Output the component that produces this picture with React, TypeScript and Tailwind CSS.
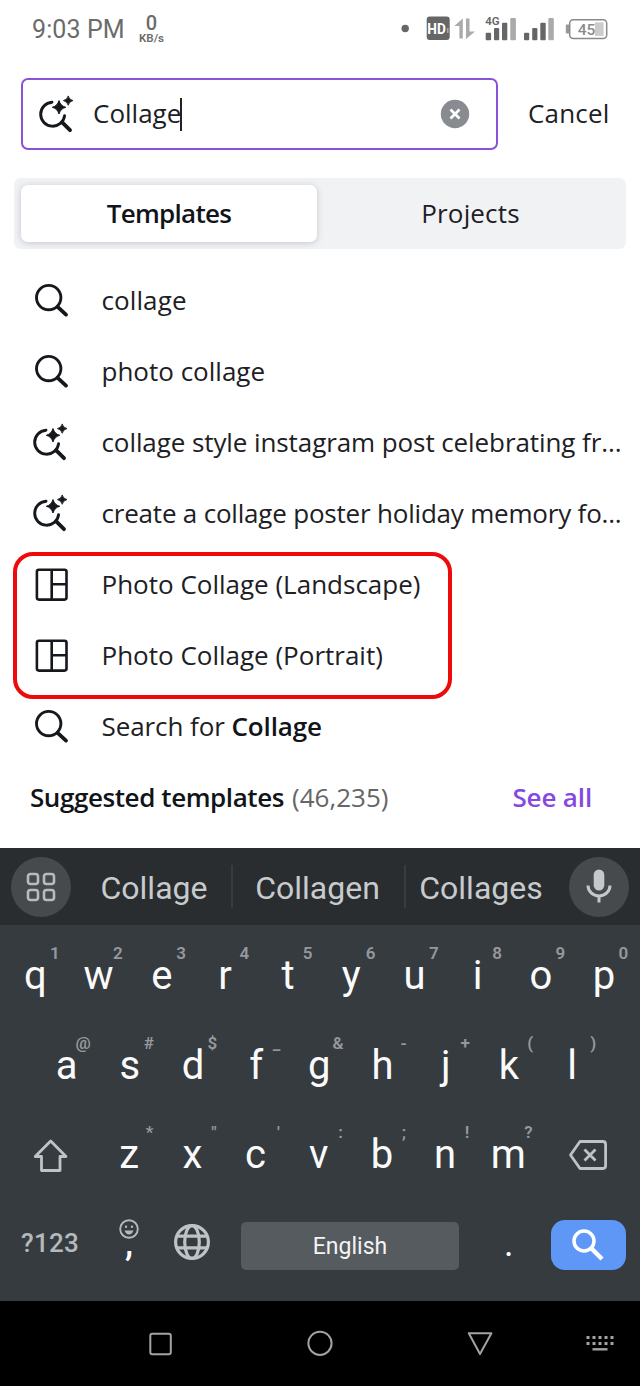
import React from 'react';

const ROBOTO = 'font-[Roboto,sans-serif]';

function SearchIcon() {
  return (
    <svg width="40" height="40" viewBox="0 0 40 40" fill="none" stroke="#15181c" className="shrink-0">
      <circle cx="18.7" cy="17.6" r="12.2" strokeWidth="2.9" />
      <path d="M27.6 26.8L36 34.6" strokeWidth="3.8" strokeLinecap="round" />
    </svg>
  );
}

function MagicSearchIcon() {
  return (
    <svg width="40" height="40" viewBox="0 0 40 40" fill="none" stroke="#15181c" className="shrink-0">
      <path d="M16 8.2A12 12 0 1 0 28.6 21.6" strokeWidth="2.9" strokeLinecap="round" />
      <path d="M26.2 28.4L34 36.2" strokeWidth="3.8" strokeLinecap="round" />
      <path
        d="M23 6.6Q24.6 12 29.7 13.3Q24.6 14.6 23 20Q21.4 14.6 16.3 13.3Q21.4 12 23 6.6Z"
        fill="#15181c"
        strokeWidth="1"
        strokeLinejoin="round"
      />
      <path
        d="M32.2 1.9Q33.1 5.7 37 6.6Q33.1 7.5 32.2 11.3Q31.3 7.5 27.4 6.6Q31.3 5.7 32.2 1.9Z"
        fill="#15181c"
        strokeWidth="0.8"
        strokeLinejoin="round"
      />
    </svg>
  );
}

function LayoutIcon() {
  return (
    <svg width="40" height="40" viewBox="0 0 40 40" fill="none" stroke="#15181c" strokeWidth="2.6" className="shrink-0">
      <rect x="6.9" y="5.8" width="29.6" height="29.8" rx="2" />
      <path d="M21.7 5.8V35.6M21.7 20.3H36.5" />
    </svg>
  );
}

function StatusBar() {
  return (
    <div className={`flex h-[58px] shrink-0 items-center text-[#6b6b6b] ${ROBOTO}`}>
      <div className="ml-[32px] w-[106px] pt-[2px] text-[25px] leading-[58px] tracking-[0.1px]">9:03 PM</div>
      <div className="flex w-[27px] flex-col items-center pt-px font-medium">
        <span className="text-[20px] leading-[17px]">0</span>
        <span className="text-[11.5px] font-semibold leading-[13px]">KB/s</span>
      </div>
      <svg width="220" height="58" viewBox="395 0 220 58" className="ml-auto mr-[25px]" fill="#666">
        <circle cx="405.2" cy="28.5" r="3.7" />
        <rect x="426.7" y="16.5" width="23" height="23.5" rx="3" />
        <text x="427.3" y="33.8" fontSize="15" fontWeight="700" fill="#fff" textLength="18.5" lengthAdjust="spacingAndGlyphs">HD</text>
        <rect x="447.2" y="28" width="1.2" height="5" fill="#bbb" />
        <path d="M462.8 18.5V38.5H459.4V26H454.3Z" fill="#aaa" />
        <path d="M466 18.5V39L475 31.5H469.5V18.5Z" fill="#aaa" />
        <text x="485.2" y="24.6" fontSize="11.5" fontWeight="600">4G</text>
        <rect x="485.7" y="32.7" width="5.4" height="7.6" rx="1" />
        <rect x="494" y="28" width="5.2" height="12.3" rx="1" />
        <rect x="502" y="22.7" width="5.3" height="17.6" rx="1" />
        <rect x="510.3" y="18" width="5.6" height="22.3" rx="1" fill="#aaa" />
        <rect x="524" y="32.7" width="5.2" height="7.6" rx="1" />
        <rect x="532.2" y="28" width="5.2" height="12.3" rx="1" />
        <rect x="540.3" y="22.7" width="5.4" height="17.6" rx="1" />
        <rect x="548.3" y="18" width="5.5" height="22.3" rx="1" fill="#aaa" />
        <rect x="565.8" y="24.5" width="3.5" height="9" rx="1" fill="#999" />
        <rect x="569.7" y="19.7" width="37" height="18.8" rx="3.5" fill="#fff" stroke="#8a8a8a" strokeWidth="1.5" />
        <rect x="595" y="22.3" width="8.6" height="13.6" fill="#ccc" />
        <text x="577.8" y="34.6" fontSize="15.5" fontWeight="500" fill="#8c8c8c">45</text>
      </svg>
    </div>
  );
}

function SearchBar() {
  return (
    <div className="mt-[20px] flex h-[72px] shrink-0 items-center">
      <div className="ml-[21px] flex h-[72px] w-[477px] items-center rounded-[7px] border-2 border-[#8c52d6]">
        <div className="ml-[12.5px] pb-[1px]"><MagicSearchIcon /></div>
        <span className="ml-[17.5px] pb-[3px] text-[26px] leading-[34px]">Collage</span>
        <span className="-ml-px h-[33px] w-[2px] bg-[#222]" />
        <svg width="30" height="30" viewBox="0 0 30 30" className="ml-auto mr-[26px]">
          <circle cx="15" cy="15" r="14.2" fill="#888c91" />
          <path d="M10.5 10.5L19.5 19.5M19.5 10.5L10.5 19.5" stroke="#fff" strokeWidth="2.6" />
        </svg>
      </div>
      <span className="ml-[30px] pb-[3px] text-[26px] leading-[34px] tracking-[0.2px]">Cancel</span>
    </div>
  );
}

function Tabs() {
  return (
    <div className="mx-[14px] mt-[28px] flex h-[71px] shrink-0 items-center rounded-[7px] bg-[#f1f2f4] px-[7px] text-[26px]">
      <div className="flex h-[57px] w-[296px] items-center justify-center rounded-[7px] bg-white pb-px font-semibold tracking-[-0.7px] text-[#111418] shadow-[0_1px_6px_rgba(64,72,90,0.25)]">
        Templates
      </div>
      <div className="flex flex-1 items-center justify-center pb-px pl-[5px] tracking-[0.15px]">Projects</div>
    </div>
  );
}

const ICONS = { search: SearchIcon, magic: MagicSearchIcon, layout: LayoutIcon };

function Row({ icon, tracking = '', children }: { icon: keyof typeof ICONS; tracking?: string; children: React.ReactNode }) {
  const Icon = ICONS[icon];
  return (
    <div className="flex h-[71px] items-center pl-[30px]">
      <Icon />
      <span className={`ml-[31.5px] whitespace-nowrap pt-[2px] text-[26px] leading-[35px] ${tracking}`}>{children}</span>
    </div>
  );
}

function Suggestions() {
  return (
    <div className="relative mt-[15px] h-[584px] shrink-0">
      <Row icon="search" tracking="tracking-[0.1px]">collage</Row>
      <Row icon="search">photo collage</Row>
      <Row icon="magic" tracking="tracking-[-0.09px]">collage style instagram post celebrating fr...</Row>
      <Row icon="magic" tracking="tracking-[-0.2px]">create a collage poster holiday memory fo...</Row>
      <Row icon="layout">Photo Collage (Landscape)</Row>
      <Row icon="layout">Photo Collage (Portrait)</Row>
      <Row icon="search" tracking="tracking-[-0.08px]">Search for <b className="font-semibold tracking-[-0.15px] text-[#111418]">Collage</b></Row>
      <div className="flex h-[71px] items-center pl-[30px] pr-[48px] pt-[2px] text-[26px] font-semibold leading-[35px]">
        <span className="tracking-[-0.42px] text-[#111418]">Suggested templates</span>
        <span className="ml-[8px] font-medium text-[#666]">(46,235)</span>
        <span className="ml-auto tracking-[-0.15px] text-[#8548e0]">See all</span>
      </div>
      <div className="absolute left-[13px] top-[288px] h-[147px] w-[439px] rounded-[20px] border-4 border-[#ee0a0a]" />
    </div>
  );
}

function SuggestionStrip() {
  return (
    <div className="flex h-[77px] shrink-0 items-center bg-[#292d30] text-[32px] text-[#c8cbcd]">
      <div className="ml-[11px] flex size-[60px] items-center justify-center rounded-full bg-[#464a4d]">
        <svg width="30" height="30" viewBox="0 0 30 30" fill="none" stroke="#b8bbbd" strokeWidth="2.6">
          <rect x="2" y="2" width="10" height="10" rx="2.5" />
          <rect x="18" y="2" width="10" height="10" rx="2.5" />
          <rect x="2" y="18" width="10" height="10" rx="2.5" />
          <rect x="18" y="18" width="10" height="10" rx="2.5" />
        </svg>
      </div>
      <span className="ml-[6px] w-[154px] pt-[2px] text-center">Collage</span>
      <span className="h-[43px] w-[2px] bg-[#383c3f]" />
      <span className="w-[171px] pr-[2px] pt-[2px] text-center">Collagen</span>
      <span className="h-[43px] w-[2px] bg-[#383c3f]" />
      <span className="w-[152px] pr-[2px] pt-[2px] text-center">Collages</span>
      <div className="ml-[11px] flex size-[60px] items-center justify-center rounded-full bg-[#464a4d]">
        <svg width="30" height="40" viewBox="0 0 30 40" fill="none" stroke="#c5c8ca">
          <rect x="9.7" y="2.5" width="10.6" height="21" rx="5.3" fill="#c5c8ca" stroke="none" />
          <path d="M4 18.5A11 10.5 0 0 0 26 18.5M15 29V35.5" strokeWidth="3" />
        </svg>
      </div>
    </div>
  );
}

function Key({ label, hint }: { label: string; hint: string }) {
  return (
    <div className="relative w-[63.2px] text-center text-[40px] leading-[91.5px] text-[#fafafa]">
      {label}
      <span className="absolute right-[7.4px] top-[13px] text-right text-[17px] font-semibold leading-[20px] text-[#95999d]">
        {hint}
      </span>
    </div>
  );
}

function KeyRow({ letters, hints }: { letters: string; hints: string }) {
  return (
    <>
      {letters.split('').map((l, i) => (
        <Key key={l} label={l} hint={hints[i]} />
      ))}
    </>
  );
}

function Keyboard() {
  return (
    <div className={`flex h-[452.5px] shrink-0 flex-col bg-[#363b3f] ${ROBOTO}`}>
      <SuggestionStrip />
      <div className="mt-[5px] flex h-[89.5px] shrink-0 pl-[3.8px]">
        <KeyRow letters="qwertyuiop" hints="1234567890" />
      </div>
      <div className="flex h-[89.5px] shrink-0 pl-[35px]">
        <KeyRow letters="asdfghjkl" hints="@#$_&-+()" />
      </div>
      <div className="flex h-[89.5px] shrink-0">
        <div className="flex w-[97.6px] items-center pl-[32px] pt-[2px]">
          <svg width="38" height="38" viewBox="0 0 38 38" fill="none" stroke="#bfc3c5" strokeWidth="2.8" strokeLinejoin="round">
            <path d="M18.7 5L34 20.5H28V34.5H9.5V20.5H3.2Z" />
          </svg>
        </div>
        <KeyRow letters="zxcvbnm" hints={'*"\':;!?'} />
        <div className="ml-[27px] flex items-center pt-[3px]">
          <svg width="42" height="34" viewBox="0 0 42 34" fill="none" stroke="#bfc3c5" strokeWidth="2.8" strokeLinejoin="round">
            <path d="M13 3.5H36Q38.6 3.5 38.6 6.5V27.5Q38.6 30.5 36 30.5H13L3.5 17Z" />
            <path d="M17.5 11.5L28.5 22.5M28.5 11.5L17.5 22.5" />
          </svg>
        </div>
      </div>
      <div className="flex flex-1 items-start">
        <span className="ml-[21px] mt-[27px] w-[90px] text-[26px] font-medium leading-[34px] tracking-[0.3px] text-[#b5b9bc]">?123</span>
        <div className="mt-[20px] flex w-[36px] flex-col items-center">
          <svg width="20" height="20" viewBox="0 0 20 20" fill="none" stroke="#b5b9bb" strokeWidth="1.9">
            <circle cx="10" cy="10" r="8.8" />
            <circle cx="7" cy="7.7" r="1.2" fill="#b5b9bb" stroke="none" />
            <circle cx="13" cy="7.7" r="1.2" fill="#b5b9bb" stroke="none" />
            <path d="M5.5 11.5H14.5Q13 15.5 10 15.5Q7 15.5 5.5 11.5Z" fill="#b5b9bb" stroke="none" />
          </svg>
          <span className="text-[36px] font-medium leading-[8px] text-white">,</span>
        </div>
        <svg width="38" height="38" viewBox="0 0 38 38" fill="none" stroke="#bfc3c5" strokeWidth="3.2" className="ml-[26px] mt-[24px]">
          <circle cx="19" cy="19" r="16.4" />
          <ellipse cx="19" cy="19" rx="7.3" ry="16.4" />
          <path d="M4 13.2H34M4 24.8H34" />
        </svg>
        <div className="ml-[30px] mt-[23px] flex h-[48px] w-[218px] items-center justify-center rounded-[5px] bg-[#565b5f] pt-[3px] text-[23px] text-[#f4f4f4]">
          English
        </div>
        <span className="w-[91.5px] pl-[8px] pt-[27px] text-center text-[36px] leading-[36px] text-white">.</span>
        <div className="mt-[21px] flex h-[50.5px] w-[75px] items-center justify-center rounded-[14px] bg-[#5f97f6]">
          <svg width="36" height="36" viewBox="0 0 36 36" fill="none" stroke="#fff" strokeWidth="3.5">
            <circle cx="14" cy="14" r="10" />
            <path d="M21 21L32 32" strokeWidth="4.4" />
          </svg>
        </div>
      </div>
    </div>
  );
}

function NavBar() {
  return (
    <div className="flex flex-1 bg-black">
      <svg width="640" height="85" viewBox="0 1301 640 85" fill="none" stroke="#a3a3a3" strokeWidth="2">
        <rect x="150.3" y="1333.8" width="20.5" height="20.5" rx="2" />
        <circle cx="320" cy="1343.3" r="11.6" />
        <path d="M468.8 1333.2H491.4L480 1354Z" strokeLinejoin="round" />
        <path d="M586.5 1337.5H613.5M586.5 1343.5H613.5" strokeWidth="3" strokeDasharray="3 3" />
        <path d="M592.5 1349.3H607.5" strokeWidth="2.4" />
      </svg>
    </div>
  );
}

export default function App() {
  return (
    <div className="flex h-[1386px] w-[640px] flex-col overflow-hidden bg-white font-['Open_Sans',sans-serif] text-[#1d2024]">
      <StatusBar />
      <SearchBar />
      <Tabs />
      <Suggestions />
      <Keyboard />
      <NavBar />
    </div>
  );
}
